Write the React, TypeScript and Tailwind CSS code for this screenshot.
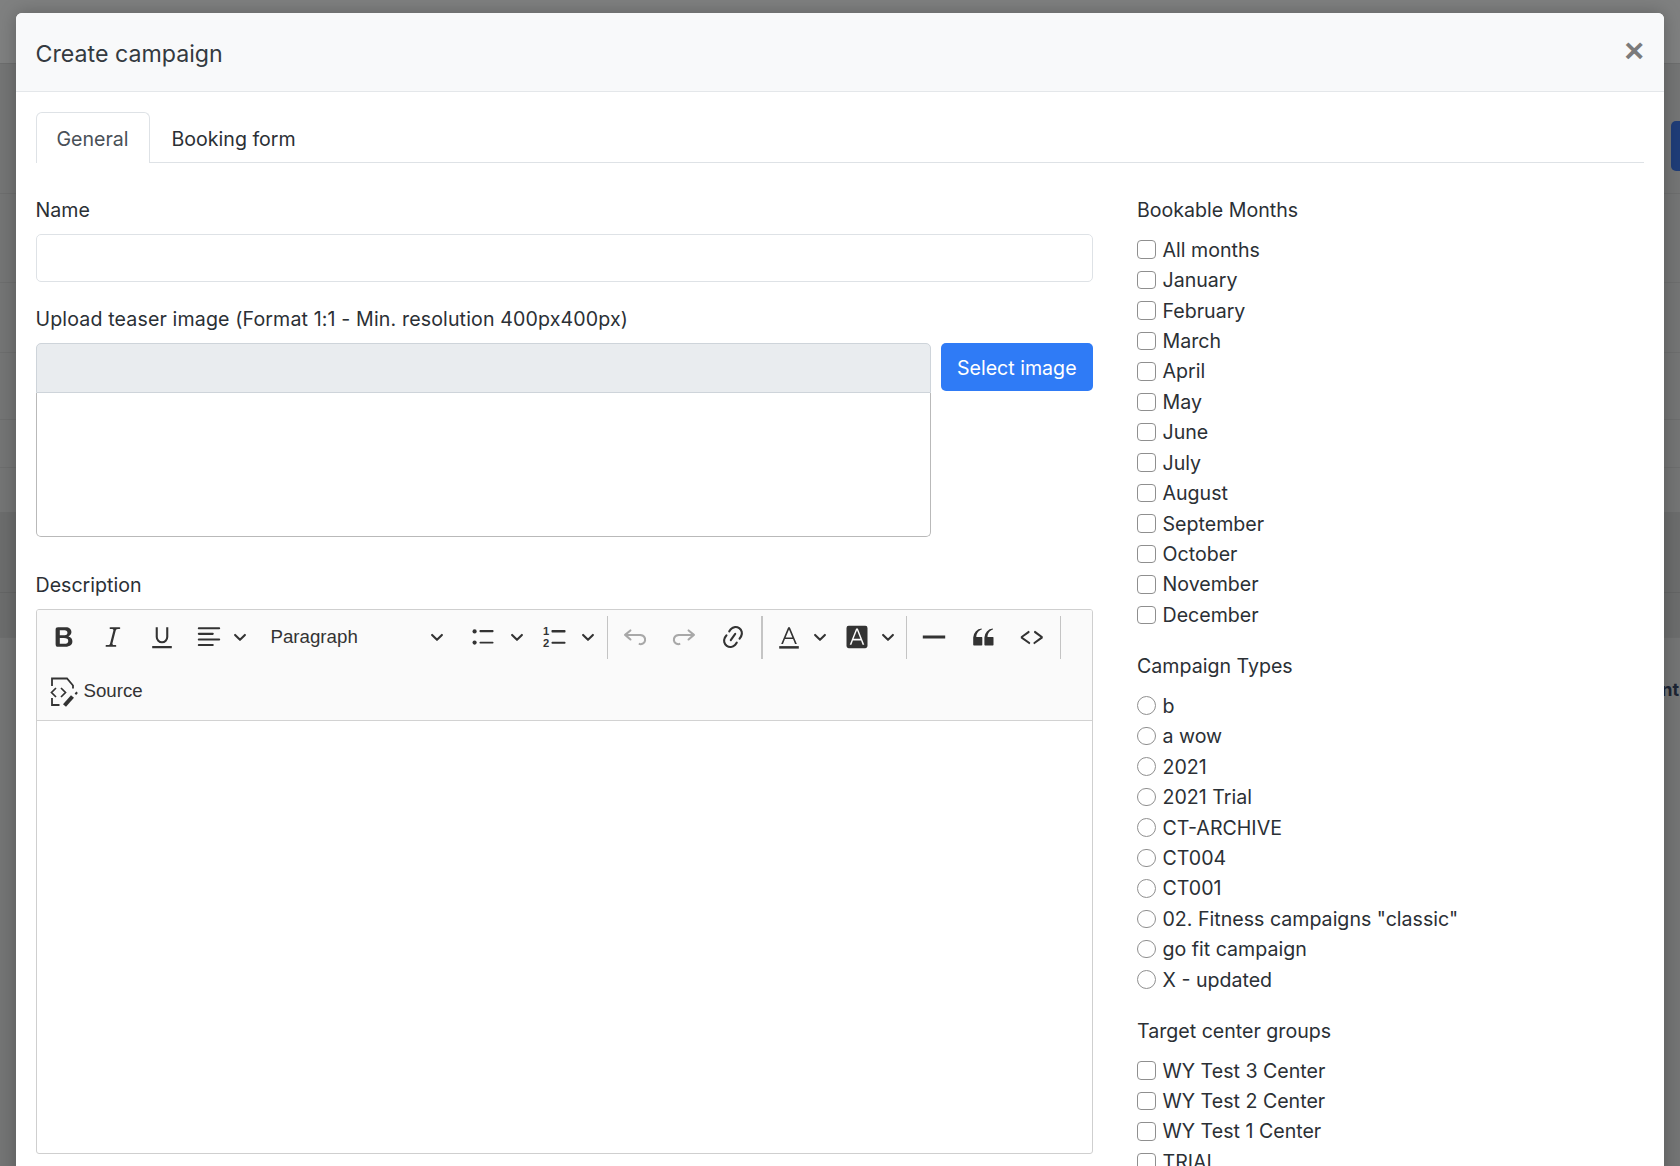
import type { ReactNode } from 'react';

const MONTHS = ['All months', 'January', 'February', 'March', 'April', 'May', 'June', 'July', 'August', 'September', 'October', 'November', 'December'];
const TYPES = ['b', 'a wow', '2021', '2021 Trial', 'CT-ARCHIVE', 'CT004', 'CT001', '02. Fitness campaigns "classic"', 'go fit campaign', 'X - updated'];
const GROUPS = ['WY Test 3 Center', 'WY Test 2 Center', 'WY Test 1 Center', 'TRIAL'];

function Icon({ children, className = 'w-[28px] h-[28px] text-[#333]' }: { children: ReactNode; className?: string }) {
  return (
    <svg viewBox="0 0 20 20" fill="currentColor" className={`shrink-0 ${className}`}>
      {children}
    </svg>
  );
}

function Chevron() {
  return (
    <svg viewBox="0 0 10 10" className="w-[14px] h-[14px] shrink-0 text-[#333]" fill="none" stroke="currentColor" strokeWidth="1.5" strokeLinecap="round" strokeLinejoin="round">
      <path d="M1.5 3.5 5 7l3.5-3.5" />
    </svg>
  );
}

function Sep() {
  return <div className="w-[1.5px] h-[43px] bg-[#c4c4c4] shrink-0" />;
}

function Btn({ children }: { children: ReactNode }) {
  return <div className="w-[49px] h-[43px] flex items-center justify-center shrink-0">{children}</div>;
}

function CheckRow({ label, type }: { label: string; type: 'checkbox' | 'radio' }) {
  return (
    <label className="flex items-center h-[30.45px] text-[19.6px] text-[#2b3035] whitespace-nowrap">
      <input
        type={type}
        className={`appearance-none w-[18.5px] h-[18.5px] border-[1.5px] border-[#8f8f8f] bg-white mr-[7px] shrink-0 ${type === 'radio' ? 'rounded-full' : 'rounded-[4px]'}`}
      />
      <span className="mt-[1.5px]">{label}</span>
    </label>
  );
}

function Toolbar() {
  return (
    <div className="bg-[#fafafa] border-b border-[#d2d2d2] h-[111px] pl-[3px] pt-[5.5px]">
      <div className="flex items-center h-[43px]">
        <Btn>
          <Icon>
            <path d="M10.187 17H5.773c-.637 0-1.092-.138-1.364-.415-.273-.277-.409-.718-.409-1.323V4.738c0-.617.14-1.062.419-1.332.279-.27.73-.406 1.354-.406h4.68c.69 0 1.288.041 1.793.124.506.083.96.242 1.36.478.341.197.644.447.906.75a3.262 3.262 0 0 1 .808 2.162c0 1.401-.722 2.426-2.167 3.075C15.05 10.175 16 11.315 16 13.01a3.756 3.756 0 0 1-2.296 3.504 6.1 6.1 0 0 1-1.517.377c-.571.073-1.238.11-2 .11zm-.217-6.217H7v4.087h3.069c1.977 0 2.965-.69 2.965-2.072 0-.707-.256-1.22-.768-1.537-.512-.319-1.277-.478-2.296-.478zM7 5.13v3.619h2.606c.729 0 1.292-.067 1.69-.2a1.6 1.6 0 0 0 .91-.765c.165-.267.247-.566.247-.897 0-.707-.26-1.176-.778-1.409-.519-.232-1.31-.348-2.375-.348H7z" />
          </Icon>
        </Btn>
        <Btn>
          <Icon>
            <path d="m9.586 14.633.021.004c-.036.335.095.655.393.962.082.083.173.15.274.201h1.474a.6.6 0 1 1 0 1.2H5.304a.6.6 0 0 1 0-1.2h1.15c.474-.07.809-.182 1.005-.334.157-.122.291-.32.404-.597l2.416-9.55a1.053 1.053 0 0 0-.281-.823 1.12 1.12 0 0 0-.442-.296H8.15a.6.6 0 0 1 0-1.2h6.443a.6.6 0 1 1 0 1.2h-1.195c-.376.056-.65.155-.823.296-.215.175-.423.439-.623.79l-2.366 9.347z" />
          </Icon>
        </Btn>
        <Btn>
          <Icon>
            <path d="M3 18v-1.5h14V18H3zM5.5 3H7v7a3 3 0 0 0 6 0V3h1.5v7a4.5 4.5 0 0 1-9 0V3z" />
          </Icon>
        </Btn>
        <div className="flex items-center w-[67px] pl-[8px] shrink-0">
          <Icon>
            <path d="M2 3.75c0 .414.336.75.75.75h14.5a.75.75 0 1 0 0-1.5H2.75a.75.75 0 0 0-.75.75zm0 8c0 .414.336.75.75.75h14.5a.75.75 0 1 0 0-1.5H2.75a.75.75 0 0 0-.75.75zm0 4c0 .414.336.75.75.75h9.929a.75.75 0 1 0 0-1.5H2.75a.75.75 0 0 0-.75.75zm0-8c0 .414.336.75.75.75h9.929a.75.75 0 1 0 0-1.5H2.75a.75.75 0 0 0-.75.75z" />
          </Icon>
          <div className="ml-[10px]"><Chevron /></div>
        </div>
        <div className="flex items-center justify-between w-[207px] pl-[17px] pr-[16.5px] shrink-0 font-['Liberation_Sans',sans-serif] text-[18.7px] text-[#333]">
          <span>Paragraph</span>
          <Chevron />
        </div>
        <div className="flex items-center w-[74px] pl-[8px] shrink-0">
          <Icon>
            <circle cx="4" cy="6" r="1.5" />
            <circle cx="4" cy="14" r="1.5" />
            <rect x="7.5" y="5" width="10" height="1.6" rx=".5" />
            <rect x="7.5" y="13.4" width="10" height="1.2" rx=".5" />
          </Icon>
          <div className="ml-[13.5px]"><Chevron /></div>
        </div>
        <div className="flex items-center w-[72px] pl-[6px] shrink-0">
          <Icon>
            <text x="1.5" y="8.5" fontSize="8" fontWeight="700" fontFamily="'Liberation Sans', sans-serif">1</text>
            <text x="1.5" y="17" fontSize="8" fontWeight="700" fontFamily="'Liberation Sans', sans-serif">2</text>
            <rect x="7.5" y="5" width="10" height="1.8" rx=".5" />
            <rect x="7.5" y="13.4" width="10" height="1.4" rx=".5" />
          </Icon>
          <div className="ml-[12px]"><Chevron /></div>
        </div>
        <Sep />
        <div className="w-[2px] shrink-0" />
        <Btn>
          <Icon className="w-[28px] h-[28px] text-[#a8a8a8]">
            <path d="m5.042 9.367 2.189 1.837a.75.75 0 0 1-.965 1.149l-3.788-3.18a.747.747 0 0 1-.21-.284.75.75 0 0 1 .17-.945L6.23 4.762a.75.75 0 1 1 .964 1.15L4.863 7.866h8.917A.75.75 0 0 1 14 7.9a4 4 0 1 1-1.477 7.718l.344-1.489a2.5 2.5 0 1 0 1.094-4.73l.008-.032H5.042z" />
          </Icon>
        </Btn>
        <Btn>
          <Icon className="w-[28px] h-[28px] text-[#a8a8a8] -scale-x-100">
            <path d="m5.042 9.367 2.189 1.837a.75.75 0 0 1-.965 1.149l-3.788-3.18a.747.747 0 0 1-.21-.284.75.75 0 0 1 .17-.945L6.23 4.762a.75.75 0 1 1 .964 1.15L4.863 7.866h8.917A.75.75 0 0 1 14 7.9a4 4 0 1 1-1.477 7.718l.344-1.489a2.5 2.5 0 1 0 1.094-4.73l.008-.032H5.042z" />
          </Icon>
        </Btn>
        <Btn>
          <Icon>
            <path d="m11.077 15 .991-1.416a.75.75 0 1 1 1.229.86l-1.148 1.64a.748.748 0 0 1-.217.206 5.251 5.251 0 0 1-8.503-5.955.741.741 0 0 1 .12-.274l1.147-1.639a.75.75 0 1 1 1.228.86L4.933 10.7l.006.003a3.75 3.75 0 0 0 6.132 4.294l.006.004zm5.494-5.335a.748.748 0 0 1-.12.274l-1.147 1.639a.75.75 0 1 1-1.228-.86l.86-1.23a3.75 3.75 0 0 0-6.144-4.301l-.86 1.229a.75.75 0 0 1-1.229-.86l1.148-1.64a.748.748 0 0 1 .217-.206 5.251 5.251 0 0 1 8.503 5.955zm-4.563-2.532a.75.75 0 0 1 .184 1.045l-3.155 4.505a.75.75 0 1 1-1.229-.86l3.155-4.506a.75.75 0 0 1 1.045-.184z" />
          </Icon>
        </Btn>
        <div className="w-[4px] shrink-0" />
        <Sep />
        <div className="flex items-center w-[65px] pl-[12px] shrink-0">
          <Icon>
            <path fillRule="evenodd" d="M12.4 10.3 10 4.6l-2.4 5.7h4.8zm.5 1.2H7.1L5.7 15H4.4l5-12h1.2l5 12h-1.300l-1.400-3.500z" />
            <rect x="3" y="16.5" width="14" height="1.8" />
          </Icon>
          <div className="ml-[10px]"><Chevron /></div>
        </div>
        <div className="flex items-center w-[78px] pl-[15px] shrink-0">
          <Icon>
            <path fillRule="evenodd" d="M4 2h12a1.5 1.5 0 0 1 1.500 1.500v13A1.500 1.500 0 0 1 16 18H4a1.500 1.500 0 0 1-1.500-1.500v-13A1.500 1.500 0 0 1 4 2zm8.400 9.300L10 5.200l-2.400 6.100h4.800zm.500 1.200H7.100L6 15.500H4.800L9.400 4h1.200l4.600 11.500H14l-1.100-3z" />
          </Icon>
          <div className="ml-[10px]"><Chevron /></div>
        </div>
        <Sep />
        <div className="w-[2.5px] shrink-0" />
        <Btn>
          <Icon>
            <path d="M2 9h16v2H2z" />
          </Icon>
        </Btn>
        <Btn>
          <Icon>
            <path d="M3 10.423a6.5 6.5 0 0 1 6.056-6.408l.038.67C6.448 5.423 5.354 7.663 5.22 10H9c.552 0 .5.432.5.986v4.511c0 .554-.448.503-1 .503h-5c-.552 0-.5-.449-.5-1.003v-4.574zm8 0a6.5 6.5 0 0 1 6.056-6.408l.038.67c-2.646.739-3.74 2.979-3.873 5.315H17c.552 0 .5.432.5.986v4.511c0 .554-.448.503-1 .503h-5c-.552 0-.5-.449-.5-1.003v-4.574z" />
          </Icon>
        </Btn>
        <Btn>
          <Icon>
            <path d="m12.500 5.700 5.200 3.900v1.300l-5.600 4c-.1.200-.3.200-.5.200-.3-.1-.6-.700-.6-1l.3-.4 4.700-3.500L11.500 7v-.5c-.1-.5.200-.8.600-.9a.6.6 0 0 1 .4.1zm-5.200 0L2 9.600v1.300l5.600 4c.1.200.3.200.5.200.3-.1.700-.7.6-1 0-.1 0-.3-.2-.4l-5-3.500L8.200 7v-.5c.1-.5-.2-.8-.6-.9a.6.6 0 0 0-.3.1z" />
          </Icon>
        </Btn>
        <div className="w-[3px] shrink-0" />
        <Sep />
      </div>
      <div className="flex items-center h-[52px] mt-[7px] pl-[10px] font-['Liberation_Sans',sans-serif] text-[18.7px] text-[#333]">
        <svg viewBox="0 0 28 30" className="w-[28px] h-[30px] shrink-0 text-[#333]" fill="none" stroke="currentColor" strokeWidth="1.8">
          <path d="M2 9V1.500h15l6 7v3" />
          <path d="M2 21v7h7.500" />
          <path d="M6 11 1.500 15.500 6 20M11 11l4.500 4.500L11 20" strokeWidth="1.700" />
          <path d="M14.500 28.500 22.500 19.500" strokeWidth="4" />
          <path d="M25.500 15.500l1.500 1.500" strokeWidth="2.500" />
        </svg>
        <span className="ml-[6px]">Source</span>
      </div>
    </div>
  );
}

export default function App() {
  return (
    <div className="relative w-[1680px] h-[1166px] overflow-hidden bg-[#747575] font-['Inter',sans-serif]">
      {/* page behind the backdrop */}
      <div className="flex flex-col">
        <div className="h-[63px] bg-[#7f8080]" />
        <div className="h-[130px] flex justify-end border-t border-[#6d6e6e] pt-[57px]">
          <div className="w-[9px] h-[50px] rounded-l-[5px] bg-[#1f3d78]" />
        </div>
        <div className="h-[89px] border-t border-[#6d6e6e]" />
        <div className="h-[70px] border-t border-[#6d6e6e]" />
        <div className="h-[67px] border-t border-[#6d6e6e]" />
        <div className="h-[48px] border-t border-[#6d6e6e]" />
        <div className="h-[45px] border-t border-[#6d6e6e]" />
        <div className="h-[80px] bg-[#6c6d6d]" />
        <div className="h-[45px] bg-[#6c6d6d] border-t border-[#646565]" />
        <div className="h-[27px] border-t border-[#6d6e6e]" />
        <div className="h-[50px] flex justify-end items-center text-[18px] font-bold text-[#1c2433] overflow-hidden pr-[1px]">nt</div>
      </div>

      {/* modal */}
      <div className="absolute left-[16px] top-[13px] w-[1648px] h-[1170px] bg-white rounded-t-[6px] overflow-hidden shadow-[0_0_18px_rgba(0,0,0,0.25)]">
        <div className="h-[79px] bg-[#f8f9fa] border-b border-[#e4e7ea] flex items-center justify-between pl-[19.5px] pr-[20px]">
          <h5 className="text-[23.2px] text-[#343a40] mt-[4px]">Create campaign</h5>
          <span className="font-['Liberation_Sans',sans-serif] font-bold text-[34px] leading-none text-[#7b7b7b] -mt-[4px]">×</span>
        </div>

        <div className="px-[19.5px] pt-[20px]">
          {/* tabs */}
          <div className="flex h-[51px] border-b border-[#dee2e6] w-[1608px] text-[19.6px]">
            <div className="w-[114px] h-[51px] pt-[4px] flex items-center justify-center border border-b-0 border-[#dee2e6] rounded-t-[6px] bg-white text-[#495057]">General</div>
            <div className="pl-[22px] pt-[6px] flex items-center h-[50px] text-[#2b3035]">Booking form</div>
          </div>

          <div className="flex gap-[44px] pt-[34px] text-[19.6px] text-[#2b3035]">
            {/* left column */}
            <div className="w-[1057.5px] shrink-0">
              <label className="block h-[26px] leading-[26px]">Name</label>
              <input className="block w-full h-[48px] mt-[11px] border border-[#dee2e6] rounded-[5px] bg-white" />
              <label className="block h-[26px] leading-[26px] mt-[24px] tracking-[0.13px]">Upload teaser image (Format 1:1 - Min. resolution 400px400px)</label>
              <div className="flex gap-[10px] mt-[11px]">
                <div className="w-[895px] shrink-0">
                  <div className="h-[50px] bg-[#e9ecef] border border-[#ced4da] rounded-t-[5px]" />
                  <div className="h-[144px] border border-t-0 border-[#b9b9b9] rounded-b-[5px] bg-white" />
                </div>
                <button className="w-[152.5px] h-[48px] pt-[3px] bg-[#2f7bf6] rounded-[5px] text-white text-[19.6px]">Select image</button>
              </div>
              <label className="block h-[26px] leading-[26px] mt-[35px]">Description</label>
              <div className="mt-[11px] h-[545px] border border-[#cfcfcf] rounded-[3px] bg-white overflow-hidden">
                <Toolbar />
              </div>
            </div>

            {/* right column */}
            <div className="flex-1">
              <label className="block h-[26px] leading-[26px] mb-[11.4px]">Bookable Months</label>
              {MONTHS.map(m => <CheckRow key={m} label={m} type="checkbox" />)}
              <label className="block h-[26px] leading-[26px] mt-[23px] mb-[11.4px]">Campaign Types</label>
              {TYPES.map(t => <CheckRow key={t} label={t} type="radio" />)}
              <label className="block h-[26px] leading-[26px] mt-[23px] mb-[11.4px]">Target center groups</label>
              {GROUPS.map(g => <CheckRow key={g} label={g} type="checkbox" />)}
            </div>
          </div>
        </div>
      </div>
    </div>
  );
}
